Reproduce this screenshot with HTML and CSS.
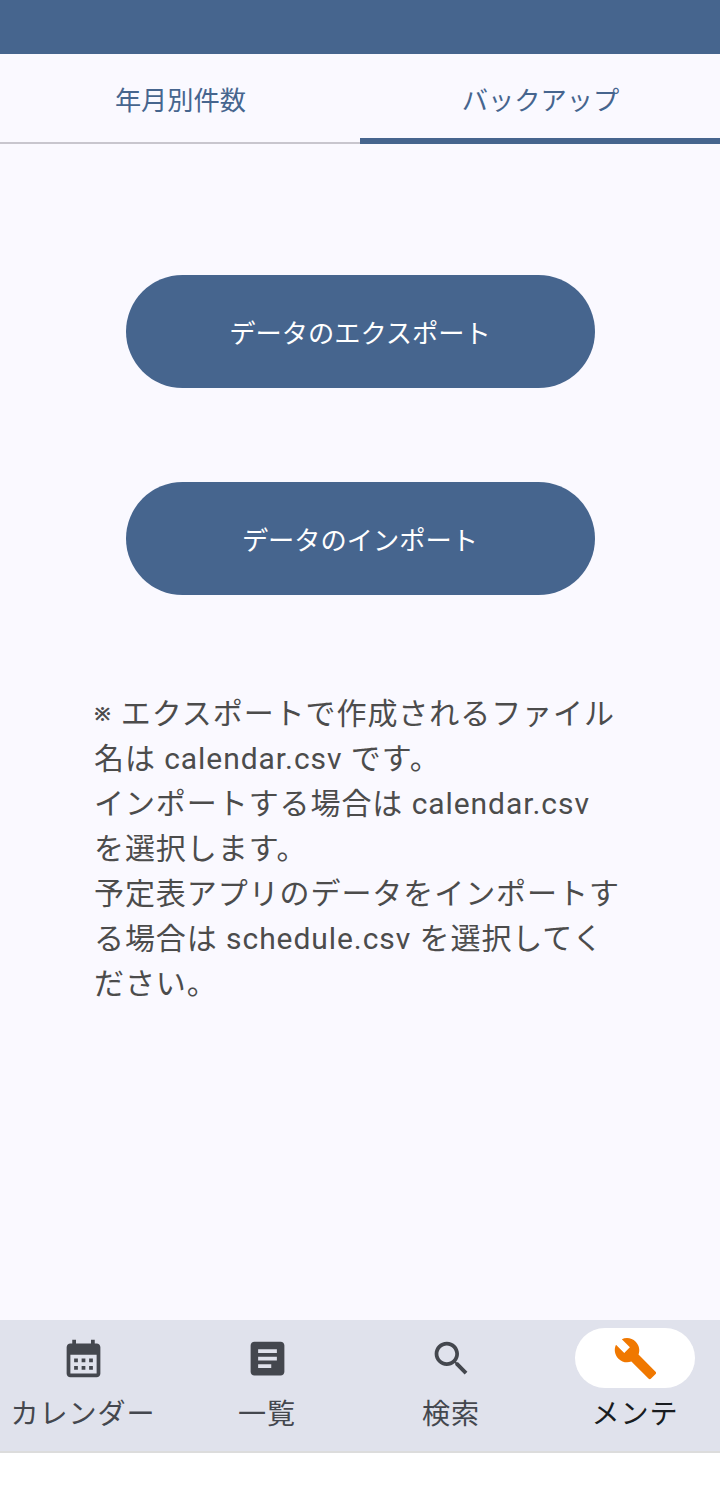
FILE: index.html
```
<!DOCTYPE html>
<html lang="ja">
<head>
  <meta charset="UTF-8">
  <meta name="viewport" content="width=device-width, initial-scale=1.0">
  <title>バックアップ</title>
  <link rel="stylesheet" href="styles.css">
</head>
<body>
  <div class="app">
    <div class="status-bar"></div>

    <nav class="tabs">
      <a class="tab">年月別件数</a>
      <a class="tab active">バックアップ</a>
    </nav>

    <main class="content">
      <button class="btn">データのエクスポート</button>
      <button class="btn">データのインポート</button>
      <p class="note"><span class="mark">※</span> エクスポートで作成されるファイル<br>名は calendar.csv です。<br>インポートする場合は calendar.csv<br>を選択します。<br>予定表アプリのデータをインポートす<br>る場合は schedule.csv を選択してく<br>ださい。</p>
    </main>

    <nav class="bottom-nav">
      <a class="nav-item">
        <span class="nav-icon">
          <svg width="45" height="45" viewBox="0 0 24 24"><path fill-rule="evenodd" d="M19 4h-1V2h-2v2H8V2H6v2H5c-1.110 0-1.990.9-1.990 2L3 20c0 1.100.890 2 2 2h14c1.100 0 2-.9 2-2V6c0-1.100-.9-2-2-2zm0 16H5V10h14v10zM9 14H7v-2h2v2zm4 0h-2v-2h2v2zm4 0h-2v-2h2v2zm-8 4H7v-2h2v2zm4 0h-2v-2h2v2zm4 0h-2v-2h2v2z"/></svg>
        </span>
        <span class="nav-label">カレンダー</span>
      </a>
      <a class="nav-item">
        <span class="nav-icon">
          <svg width="45" height="45" viewBox="0 0 24 24"><path d="M19 3H5c-1.100 0-2 .9-2 2v14c0 1.100.9 2 2 2h14c1.100 0 2-.9 2-2V5c0-1.100-.9-2-2-2zm-5 14H7v-2h7v2zm3-4H7v-2h10v2zm0-4H7V7h10v2z"/></svg>
        </span>
        <span class="nav-label">一覧</span>
      </a>
      <a class="nav-item">
        <span class="nav-icon">
          <svg width="45" height="45" viewBox="0 0 24 24"><path d="M15.500 14h-.790l-.280-.270C15.410 12.590 16 11.110 16 9.500 16 5.910 13.090 3 9.500 3S3 5.910 3 9.500 5.910 16 9.500 16c1.610 0 3.090-.590 4.230-1.570l.270.280v.790l5 4.990L20.490 19l-4.990-5zm-6 0C7.010 14 5 11.990 5 9.500S7.010 5 9.500 5 14 7.010 14 9.500 11.990 14 9.500 14z"/></svg>
        </span>
        <span class="nav-label">検索</span>
      </a>
      <a class="nav-item active">
        <span class="nav-icon">
          <svg width="45" height="45" viewBox="0 0 24 24"><path d="M22.700 19l-9.100-9.100c.9-2.300.4-5-1.500-6.900-2-2-5-2.400-7.400-1.300L9 6 6 9 1.600 4.700C.4 7.100.9 10.100 2.900 12.100c1.900 1.900 4.600 2.400 6.900 1.500l9.100 9.100c.4.4 1 .4 1.400 0l2.300-2.300c.5-.4.5-1.100.1-1.400z"/></svg>
        </span>
        <span class="nav-label">メンテ</span>
      </a>
    </nav>
  </div>
</body>
</html>
```
FILE: styles.css
```
:root {
  --color-primary: #46658e;
  --color-bg: #faf9ff;
  --color-nav: #e0e2ec;
  --color-text: #44474e;
  --color-accent: #f07800;
}

* {
  margin: 0;
  padding: 0;
  box-sizing: border-box;
  font-family: Roboto, "Noto Sans CJK JP", sans-serif;
}

body {
  background: #fff;
}

.app {
  display: flex;
  flex-direction: column;
  height: 1496px;
}

.status-bar {
  height: 54px;
  background: var(--color-primary);
}

.tabs {
  display: flex;
  height: 90px;
  background: var(--color-bg);
}

.tab {
  flex: 1;
  padding: 28px 0 0 1px;
  border-bottom: 2px solid #c8c6ce;
  color: var(--color-primary);
  font-size: 26.25px;
  line-height: 38px;
  text-align: center;
}

.tab.active {
  border-bottom: 6px solid var(--color-primary);
}

.content {
  display: flex;
  flex-direction: column;
  align-items: center;
  height: 1176px;
  padding-top: 131px;
  background: var(--color-bg);
}

.btn {
  width: 469px;
  height: 113px;
  margin-bottom: 94px;
  border: none;
  border-radius: 57px;
  background: var(--color-primary);
  color: #fff;
  font-size: 26.25px;
}

.note {
  align-self: flex-start;
  margin: 2px 0 0 94px;
  color: #4c4c4c;
  font-size: 30px;
  line-height: 45px;
  letter-spacing: .93px;
  white-space: nowrap;
}

.mark {
  display: inline-block;
  width: 18.5px;
  font-family: "Noto Sans", "Open Sans", sans-serif;
  font-size: 20px;
  font-weight: 700;
  line-height: 1;
  vertical-align: 3px;
}

.bottom-nav {
  display: flex;
  justify-content: space-between;
  height: 133px;
  padding: 8px 1px 0 0;
  margin-left: -1px;
  background: var(--color-nav);
  border-bottom: 2px solid #dcdcdc;
}

.nav-item {
  display: flex;
  flex-direction: column;
  align-items: center;
  width: 168px;
  color: var(--color-text);
}

.nav-icon {
  display: flex;
  align-items: center;
  justify-content: center;
  width: 120px;
  height: 60px;
  border-radius: 30px;
}

.nav-icon svg {
  fill: currentColor;
}

.nav-label {
  margin-top: 8px;
  font-size: 28.1px;
  line-height: 38px;
  letter-spacing: .94px;
}

.nav-item.active {
  color: #191c20;
}

.nav-item.active .nav-icon {
  background: #fff;
  color: var(--color-accent);
}
```
